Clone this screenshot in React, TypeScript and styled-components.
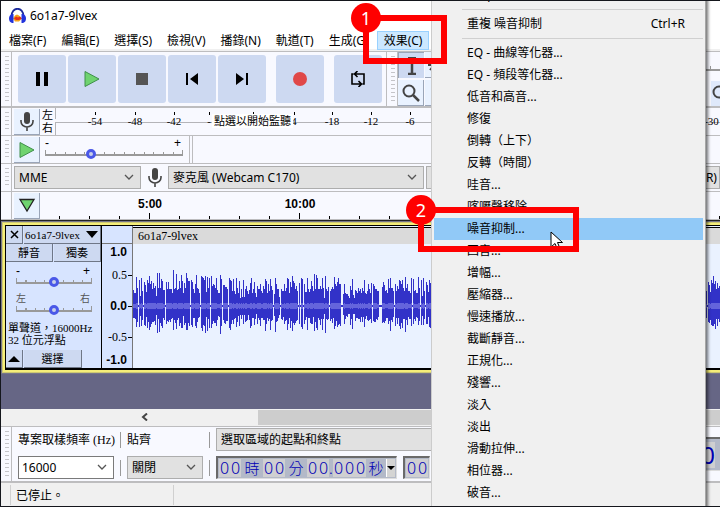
import React from 'react';
import styled, { createGlobalStyle, css } from 'styled-components';

const SANS = '"Noto Sans", "Noto Sans CJK TC", sans-serif';
const SERIF = '"Liberation Serif", "Noto Sans CJK TC", serif';
const ARIAL = '"Liberation Sans", "Noto Sans CJK TC", sans-serif';

const Global = createGlobalStyle`
  * { box-sizing: border-box; }
  html, body { margin: 0; height: 100%; overflow: hidden; }
  body { font: 12px/16px ${SANS}; color: #000; background: #f0f0f0; }
  button, input, select { font: inherit; color: inherit; margin: 0; padding: 0; border: 0; border-radius: 0; outline: 0; }
  svg { display: block; flex: none; }
`;

/* ---------- window ---------- */
const Window = styled.div`
  position: relative;
  display: flex;
  flex-direction: column;
  height: 100vh;
  overflow: hidden;
  border: solid #14161c;
  border-width: 1px 0 1px 1px;
  background: #f0f0f0;
  white-space: nowrap;
`;
const TitleBar = styled.header`
  display: flex;
  align-items: center;
  gap: 4px;
  flex: none;
  height: 30px;
  padding-left: 8px;
  background: #fff;
`;
const MenuBar = styled.nav`
  display: flex;
  gap: 1px;
  flex: none;
  height: 20px;
  padding-left: 1px;
  background: linear-gradient(#fff 18px, #f0f0f0 18px);
`;
const MenuButton = styled.button<{ $open?: boolean }>`
  height: 19px;
  padding: 0 6px;
  line-height: 17px;
  border: 1px solid transparent;
  background: none;
  ${p => p.$open && css`background: #cce8ff; border-color: #99d1ff;`}
`;

/* ---------- toolbars ---------- */
const Toolbar = styled.section<{ $h: number; $thick?: boolean }>`
  display: flex;
  flex: none;
  height: ${p => p.$h}px;
  background: #f8f9ff;
  border-bottom: ${p => (p.$thick ? 2 : 1)}px solid #bdbdbf;
  ${p => p.$thick && 'border-top: 1px solid #bdbdbf;'}
`;
const Grip = styled.div<{ $blank?: boolean }>`
  flex: none;
  width: 11px;
  padding: 4px 2px 4px 4px;
  border-right: 1px solid #bdbdbf;
  &::before {
    content: '';
    display: ${p => (p.$blank ? 'none' : 'block')};
    width: 4px;
    height: 100%;
    background: repeating-linear-gradient(#c4c4c8 0 1px, transparent 1px 4px);
  }
`;
const Transport = styled.div`
  display: flex;
  gap: 2px;
  padding: 3px 4px 3px 6px;
  border-right: 1px solid #bdbdbf;
`;
const TransportButton = styled.button<{ $gap?: boolean }>`
  display: grid;
  place-items: center;
  width: 48px;
  height: 48px;
  margin-left: ${p => (p.$gap ? 8 : 0)}px;
  border-radius: 3px;
  background: #cdd9f1;
`;
const ToolGrid = styled.div`
  display: grid;
  grid-template-columns: 26px 26px;
  grid-template-rows: 26px 26px;
  gap: 2px 1px;
`;
const ToolButton = styled.button<{ $on?: boolean }>`
  display: grid;
  place-items: center;
  width: 26px;
  height: 26px;
  background: ${p => (p.$on ? '#cdd9f1' : '#e9f2ff')};
  border: solid #9aa5b8;
  border-width: ${p => (p.$on ? '1px 0 0 1px' : '0 1px 1px 0')};
`;
const IconCell = styled.div`
  flex: none;
  padding: 1px 1px 0 2px;
`;
const EndTools = styled.div`
  display: grid;
  grid-template-rows: 27px 27px;
  justify-items: end;
  width: 20px;
  margin-left: auto;
  overflow: hidden;
`;
const EndSlider = styled.div`
  width: 20px;
  height: 19px;
  border-bottom: 2px solid #999;
  background: repeating-linear-gradient(to right, #999 0 1px, transparent 1px 10px) 0 100% / 100% 3px no-repeat;
`;
const EndButton = styled.button`
  display: flex;
  width: 9px;
  height: 26px;
  padding-top: 3px;
  margin-top: 2px;
  overflow: hidden;
  background: #dfe9fb;
`;
const Channels = styled.div`
  display: grid;
  grid-template-rows: 13px 13px;
  width: 14px;
  padding-left: 1px;
  font-size: 11px;
  line-height: 13px;
`;
const Meter = styled.div`
  position: relative;
  flex: 1;
  min-width: 0;
  overflow: hidden;
`;
const MeterHint = styled.button`
  position: absolute;
  left: 157px;
  top: 6px;
  height: 14px;
  padding: 0 2px;
  font-size: 11px;
  line-height: 14px;
  background: #fff;
`;

/* ---------- sliders ---------- */
const SliderBox = styled.label<{ $w: number }>`
  display: block;
  width: ${p => p.$w}px;
`;
const SliderEnds = styled.span<{ $muted?: boolean }>`
  display: flex;
  justify-content: space-between;
  height: 12px;
  padding: 0 2px 0 0;
  font: 12px/12px ${ARIAL};
  ${p => p.$muted && 'color: #555; font-size: 10px;'}
`;
const Range = styled.input<{ $n: number }>`
  appearance: none;
  display: block;
  width: 100%;
  height: 10px;
  background:
    linear-gradient(#999, #999) 0 5px / 100% 2px no-repeat,
    linear-gradient(to right, #999 0 1px, transparent 1px calc(100% - 1px), #999 calc(100% - 1px)) 0 1px / 100% 4px no-repeat,
    repeating-linear-gradient(to right, #999 0 1px, transparent 1px calc(100% / ${p => p.$n})) 0 3px / 100% 2px no-repeat;
  &::-webkit-slider-thumb {
    appearance: none;
    width: 10px;
    height: 10px;
    border: 3px solid #4a58e8;
    border-radius: 50%;
    background: #c8d0e8;
  }
`;
const PlaySpeed = styled.div`
  padding: 1px 6px 0 4px;
  border-right: 1px solid #bdbdbf;
`;
const Rule = styled.div`
  width: 3px;
  border-right: 1px solid #bdbdbf;
`;

/* ---------- selects ---------- */
const Picker = styled.label<{ $w?: number }>`
  position: relative;
  display: block;
  flex: ${p => (p.$w ? 'none' : '1 1 0')};
  width: ${p => (p.$w ? p.$w + 'px' : 'auto')};
  min-width: 0;
  height: 23px;
  & > svg { position: absolute; right: 7px; top: 8px; pointer-events: none; }
`;
const Select = styled.select<{ $indent?: number }>`
  appearance: none;
  display: block;
  width: 100%;
  height: 23px;
  padding-left: ${p => p.$indent ?? 4}px;
  line-height: 21px;
  background: #e1e1e1;
  border: 1px solid #adadad;
`;
const TextBox = styled.input`
  display: block;
  width: 100%;
  height: 23px;
  padding-left: 3px;
  background: #fff;
  border: 1px solid #7a7a7a;
`;
const DeviceRow = styled.div`
  display: flex;
  flex: 1;
  min-width: 0;
  padding: 2px 0 0 2px;
  gap: 2px;
`;
const MicCell = styled.div`
  display: grid;
  place-items: center;
  width: 23px;
  height: 23px;
`;

/* ---------- timeline ---------- */
const Timeline = styled.div`
  flex: 1;
  min-width: 0;
  overflow: hidden;
`;

/* ---------- track ---------- */
const TrackFrame = styled.section`
  flex: none;
  height: 154px;
  padding: 1px 0 1px 1px;
  border-top: 1px solid #222;
  background: #77778a;
`;
const TrackGlow = styled.div`
  height: 151px;
  padding: 2px 0 2px 2px;
  background: #f5ee79;
  border: solid #cdc873;
  border-width: 1px 0 1px 1px;
`;
const Track = styled.div`
  display: flex;
  height: 145px;
  border: solid #000;
  border-width: 1px 0 2px 1px;
  background: #d7e4ff;
`;
const Panel = styled.div`
  display: flex;
  flex-direction: column;
  flex: none;
  width: 96px;
  border-right: 1px solid #000;
`;
const PanelRow = styled.div<{ $cols: string }>`
  display: grid;
  grid-template-columns: ${p => p.$cols};
  gap: 1px;
  height: 18px;
  flex: none;
`;
const PanelButton = styled.button`
  display: flex;
  align-items: center;
  justify-content: center;
  height: 18px;
  background: #cdd9f1;
  border: solid #6f7787;
  border-width: 0 1px 1px 0;
  font: 11px/16px ${SERIF};
`;
const NameButton = styled(PanelButton)`
  justify-content: space-between;
  padding: 0 2px 0 1px;
`;
const Gains = styled.div`
  display: flex;
  flex-direction: column;
  gap: 6px;
  padding: 3px 0 0 10px;
  height: 60px;
`;
const Info = styled.p`
  margin: 0;
  padding: 0 2px;
  font: 11px/12px ${SERIF};
`;
const Footer = styled(PanelRow)`
  margin-top: auto;
`;
const Scale = styled.div`
  display: grid;
  grid-template-rows: 18px 16px 30px 32px 30px 16px;
  align-items: center;
  flex: none;
  width: 31px;
  border-right: 1px solid #777;
`;
const ScaleTop = styled.div`
  height: 18px;
  border-bottom: 1px solid #777;
`;
const ScaleMark = styled.div<{ $bold?: boolean; $tick?: boolean }>`
  display: flex;
  align-items: center;
  justify-content: flex-end;
  gap: 1px;
  padding-right: ${p => (p.$tick ? 0 : 5)}px;
  font: ${p => (p.$bold ? 'bold 12px/16px ' + ARIAL : '12px/16px ' + SERIF)};
  &::after {
    content: '';
    display: ${p => (p.$tick ? 'block' : 'none')};
    width: 4px;
    height: 1px;
    background: #000;
  }
`;
const Clip = styled.div`
  flex: 1;
  min-width: 0;
  padding-top: 1px;
  overflow: hidden;
  background: #eaf2ff;
`;
const ClipTitle = styled.div`
  height: 17px;
  padding-left: 5px;
  border-top: 1px solid #000;
  background: #dadada;
  font: 12px/17px ${SERIF};
`;
const Workspace = styled.main`
  flex: 1;
  min-height: 0;
  background: #666685;
`;

/* ---------- bottom ---------- */
const ScrollBar = styled.div`
  display: flex;
  flex: none;
  height: 17px;
  padding-left: 135px;
  border-bottom: 1px solid #f0f0f0;
`;
const ScrollButton = styled.button`
  display: grid;
  place-items: center;
  width: 17px;
  height: 16px;
  background: #f0f0f0;
`;
const ScrollThumb = styled.div`
  flex: 1;
  height: 15px;
  margin: 1px 0 0 105px;
  background: #cdcdcd;
`;
const Selection = styled.div`
  display: grid;
  grid-template-columns: 96px 1px 76px 1px minmax(0, 1fr);
  grid-template-rows: 23px 23px;
  gap: 5px 6px;
  flex: 1;
  min-width: 0;
  padding: 1px 0 0 6px;
  & > * { align-self: center; }
`;
const FieldLabel = styled.label`
  font: 12px/16px ${SERIF};
`;
const Divider = styled.i`
  width: 1px;
  height: 16px;
  background: #999;
`;
const Times = styled.div`
  display: flex;
  gap: 6px;
`;
const TimeBox = styled.div<{ $big?: boolean }>`
  display: flex;
  align-items: center;
  justify-content: ${p => (p.$big ? 'flex-end' : 'flex-start')};
  flex: none;
  height: ${p => (p.$big ? 34 : 23)}px;
  width: ${p => (p.$big ? '112px' : 'auto')};
  margin-top: ${p => (p.$big ? 10 : 0)}px;
  padding: 0 ${p => (p.$big ? 5 : 1)}px 0 1px;
  overflow: hidden;
  border: solid;
  border-width: ${p => (p.$big ? '2px 0 1px 2px' : '2px 1px 1px 2px')};
  border-color: #6a6a6a #ddd #ddd #6a6a6a;
  background: #b3b9c8;
  color: #0000b4;
`;
const Digits = styled.span`
  display: flex;
  background: #cfcfd1;
  font: 16px/18px ${SANS};
  & > b { width: 11px; font-weight: 300; text-align: center; }
`;
const Unit = styled.span<{ $w: number }>`
  width: ${p => p.$w}px;
  text-align: center;
  font: 300 15px/18px "Noto Sans CJK TC", sans-serif;
`;
const TimeArrow = styled.button`
  display: grid;
  place-items: center;
  width: 9px;
  height: 18px;
  background: #d4d4d4;
  border-left: 1px solid #fff;
`;
const BigTime = styled.span`
  font: 24px/26px ${SANS};
  background: #cfcfd1;
`;
const StatusBar = styled.footer`
  display: flex;
  align-items: center;
  flex: none;
  height: 23px;
  padding: 2px 0 1px 9px;
  background: #f0f0f0;
`;
const StatusCell = styled.div<{ $w?: number }>`
  width: ${p => (p.$w ? p.$w + 'px' : 'auto')};
  height: 20px;
  padding: 3px 5px 1px;
  border-left: 1px solid #d0d0d0;
`;

/* ---------- pop-up menu and call-outs ---------- */
const Popup = styled.div`
  position: absolute;
  left: 430px;
  right: 14px;
  top: -17px;
  bottom: -14px;
  padding: 0 2px;
  overflow: hidden;
  background: #f0f0f0;
  border: solid #a6a6a6;
  border-width: 0 1px;
  border-left-color: #ccc;
  box-shadow: 3px 0 3px -1px rgba(0, 0, 0, 0.55);
`;
const PopupItem = styled.button<{ $on?: boolean }>`
  display: flex;
  justify-content: space-between;
  align-items: center;
  width: 100%;
  height: 22px;
  padding: 0 18px 0 33px;
  text-align: left;
  background: ${p => (p.$on ? '#91c9f7' : 'none')};
`;
const PopupLine = styled.hr`
  height: 1px;
  margin: 3px 0 3px 28px;
  border: 0;
  background: #d0d0d0;
`;
const Pointer = styled.div`
  position: absolute;
  left: 549px;
  top: 230px;
`;
const Frame = styled.div<{ $x: number; $y: number; $w: number; $h: number }>`
  position: absolute;
  left: ${p => p.$x}px;
  top: ${p => p.$y}px;
  width: ${p => p.$w}px;
  height: ${p => p.$h}px;
  border: 6px solid #f00;
  pointer-events: none;
`;
const Badge = styled.span`
  position: absolute;
  left: -18px;
  top: -18px;
  width: 30px;
  height: 30px;
  border-radius: 50%;
  background: #f00;
  color: #fff;
  font: 18px/30px ${SANS};
  text-align: center;
`;

/* ---------- icons ---------- */
const Chevron = () => (
  <svg width="10" height="7"><path d="M1 1l4 4 4-4" fill="none" stroke="#555" strokeWidth="1.3" /></svg>
);
const Mic = () => (
  <svg width="16" height="20" viewBox="0 0 16 20">
    <rect x="5" y="0" width="6" height="12" rx="3" fill="#444" />
    <path d="M2 8v1.500a6 5.500 0 0 0 12 0V8M8 15v4" fill="none" stroke="#444" strokeWidth="1.600" />
  </svg>
);
const PlayIcon = () => (
  <svg width="16" height="18"><path d="M1 1.500L15 9 1 16.500z" fill="#6fd36f" stroke="#3f8f4a" /></svg>
);
const Magnifier = () => (
  <svg width="20" height="20">
    <circle cx="8" cy="8" r="5.500" fill="none" stroke="#444" strokeWidth="2" />
    <path d="M12 12l6 6" stroke="#444" strokeWidth="2.500" />
  </svg>
);
const Logo = () => (
  <svg width="17" height="16" viewBox="0 0 17 16">
    <path d="M2.500 9C2-2 15-2 14.500 9" fill="none" stroke="#1c2a9c" strokeWidth="1.800" />
    <path d="M4 10.500l2-3 2-1 2 1 3 3-3 3H6z" fill="#f6a21a" />
    <path d="M5 10.500l2-2 2 1 2-1 2 2-3 1.500H7z" fill="#e8301c" />
    <path d="M4.500 6v9H3Q0 14 0 10.500T3 6zM12.500 6v9H14Q17 14 17 10.500T14 6z" fill="#2233dd" />
  </svg>
);

/* Upward peak of each pixel column, in thirds of a pixel; 0 is silence. */
const PEAKS = [
  48, 40, 39, 87, 53, 0, 78, 30, 83, 45, 0, 72, 63, 43, 78, 70, 90, 67, 75, 52, 70, 55, 60, 30, 98, 55, 98, 55, 82, 75, 48, 48, 0,
  72, 50, 72, 50, 50, 50, 40, 108, 50, 53, 96, 48, 50, 75, 53, 93, 75, 40, 70, 55, 98, 83, 75, 75, 0, 78, 72, 50, 40, 65, 92, 53, 50, 38, 0,
  90, 88, 85, 77, 90, 43, 88, 53, 83, 0, 90, 60, 67, 63, 55, 83, 48, 40, 38, 93, 82, 0, 62, 62, 57, 57, 50, 0, 85, 78, 75, 45, 80, 45,
  35, 85, 55, 40, 75, 25, 50, 28, 78, 28, 50, 60, 45, 35, 48, 70, 83, 40, 50, 72, 38, 28, 60, 52, 52, 65, 45, 40, 60, 52, 82, 75, 40, 65, 45, 80,
  60, 48, 0, 35, 84, 65, 50, 50, 28, 0, 50, 45, 45, 65, 45, 55, 85, 80, 40, 72, 57, 90, 75, 70, 52, 60, 45, 0, 68, 0, 85, 80, 0,
  65, 43, 43, 83, 52, 42, 52, 75, 60, 45, 95, 50, 93, 85, 50, 52, 60, 50, 85, 55, 25, 90, 50, 45, 57, 0, 45, 50, 57, 50, 88, 65, 60, 72, 83, 65, 65,
  0, 0, 35, 65, 40, 37, 35, 30, 25, 60, 48, 80, 32, 25, 48, 45, 40, 55, 45, 50, 40, 55, 45, 78, 40, 35, 45, 65, 50, 40, 68, 0,
  65, 60, 50, 50, 45, 45, 0, 0, 0, 57, 72, 62, 45, 47, 40, 80, 55, 83, 55, 55, 45, 0, 65, 45, 60, 50, 77, 75, 67, 78, 55, 45, 87, 55, 65, 45, 45, 40, 83, 0, 80, 45,
];
const column = (i: number) => PEAKS[i % PEAKS.length];
const wavePath = Array.from({ length: 600 }, (_, i) => {
  const p = column(i);
  const up = p ? Math.round(p / 3) : 1;
  const down = p ? Math.round(p * (0.6 + ((i * 7) % 5) * 0.06) / 3) + 2 : 1;
  return `M${i} ${62 - up}h1v${up + down}h-1z`;
}).join('');
const rmsPath = Array.from({ length: 600 }, (_, i) => {
  const p = column(i);
  const r = p ? 2 + (p > 48 ? 1 : 0) : 0;
  return r ? `M${i} ${62 - r}h1v${r * 2}h-1z` : '';
}).join('');

/* Meter scale: x position and label of each mark; an empty label leaves the bare tick. */
const METER_MARKS: [number, string][] = [
  [41, '-54'], [81, '-48'], [120, '-42'], [155, '-'], [199, ''], [240, '4'], [278, '-18'], [317, '-12'], [356, '-6'],
];
const EFFECTS = [
  'EQ - 曲線等化器...', 'EQ - 頻段等化器...', '低音和高音...', '修復', '倒轉（上下）', '反轉（時間）', '哇音...',
  '喀嚦聲移除...', '噪音抑制...', '回音...', '增幅...', '壓縮器...', '慢速播放...', '截斷靜音...', '正規化...',
  '殘響...', '淡入', '淡出', '滑動拉伸...', '相位器...', '破音...',
];
const MENUS = ['檔案(F)', '編輯(E)', '選擇(S)', '檢視(V)', '播錄(N)', '軌道(T)', '生成(G)', '效果(C)'];

const Zeros = ({ n }: { n: number }) => (
  <Digits>{Array.from({ length: n }, (_, i) => <b key={i}>0</b>)}</Digits>
);

export default function App() {
  return (
    <Window>
      <Global />
      <TitleBar><Logo /><span>6o1a7-9lvex</span></TitleBar>
      <MenuBar>
        {MENUS.map((m, i) => <MenuButton key={m} $open={i === 7}>{m}</MenuButton>)}
      </MenuBar>

      <Toolbar $h={57} $thick>
        <Grip />
        <Transport>
          <TransportButton aria-label="暫停"><svg width="14" height="14"><path d="M1 0h4v14H1zM9 0h4v14H9z" /></svg></TransportButton>
          <TransportButton aria-label="播放"><PlayIcon /></TransportButton>
          <TransportButton aria-label="停止"><svg width="12" height="12"><path d="M0 0h12v12H0z" fill="#555" /></svg></TransportButton>
          <TransportButton aria-label="跳至開頭"><svg width="14" height="14"><path d="M1 1h2v12H1zM13 1v12L5 7z" /></svg></TransportButton>
          <TransportButton aria-label="跳至結尾"><svg width="14" height="14"><path d="M11 1h2v12h-2zM1 1v12l8-6z" /></svg></TransportButton>
          <TransportButton aria-label="錄製" $gap><svg width="14" height="14"><circle cx="7" cy="7" r="7" fill="#e04848" /></svg></TransportButton>
          <TransportButton aria-label="循環" $gap>
            <svg width="16" height="16" viewBox="0 0 16 16">
              <path d="M5 3h9v10h-1.500M3.500 3H2v10h9M7.500 0L4.500 3l3 3M8.500 10l3 3-3 3" fill="none" stroke="#000" strokeWidth="1.600" />
            </svg>
          </TransportButton>
        </Transport>
        <Grip />
        <ToolGrid>
          <ToolButton $on aria-label="選擇工具"><svg width="12" height="18"><path d="M2 1h8M2 17h8M6 1v16" stroke="#444" strokeWidth="2.500" /></svg></ToolButton>
          <ToolButton aria-label="包絡工具"><svg width="20" height="16"><path d="M0 8h8M2 3l4 5-4 5" stroke="#444" strokeWidth="2" fill="none" /></svg></ToolButton>
          <ToolButton aria-label="縮放工具"><Magnifier /></ToolButton>
          <ToolButton aria-label="多功能工具"><svg width="16" height="16"><path d="M1 3l12 10M1 13L13 3" stroke="#888" /></svg></ToolButton>
        </ToolGrid>
        <EndTools><EndSlider /><EndButton aria-label="縮小"><Magnifier /></EndButton></EndTools>
      </Toolbar>

      <Toolbar $h={28}>
        <Grip />
        <IconCell><ToolButton aria-label="錄音電平"><Mic /></ToolButton></IconCell>
        <Channels><span>左</span><span>右</span></Channels>
        <Meter>
          <svg width="1200" height="27">
            <path d="M0.500 0v11M0.500 14v13M0 14.500h1200" stroke="#b4b4b8" fill="none" />
            {METER_MARKS.map(([x, label]) => (
              <g key={x}>
                <path d={`M${x - 0.5} 4v3`} stroke="#000" />
                {label && <text x={x - 1} y="17" textAnchor="middle" fontSize="11" fontFamily='"Liberation Serif", serif'>{label}</text>}
              </g>
            ))}
            <text x="649" y="17" fontSize="11" fontFamily='"Liberation Serif", serif'>-30</text>
          </svg>
          <MeterHint>點選以開始監聽</MeterHint>
        </Meter>
      </Toolbar>

      <Toolbar $h={28}>
        <Grip />
        <IconCell><ToolButton aria-label="以指定速度播放"><PlayIcon /></ToolButton></IconCell>
        <PlaySpeed>
          <SliderBox $w={138}>
            <SliderEnds><span>-</span><span>+</span></SliderEnds>
            <Range type="range" aria-label="播放速度" $n={14} min={0} max={100} defaultValue={32} />
          </SliderBox>
        </PlaySpeed>
        <Rule />
      </Toolbar>

      <Toolbar $h={28}>
        <Grip />
        <DeviceRow>
          <Picker $w={127}><Select aria-label="音訊主機"><option>MME</option></Select><Chevron /></Picker>
          <MicCell><Mic /></MicCell>
          <Picker $w={256}><Select aria-label="錄音裝置"><option>麥克風 (Webcam C170)</option></Select><Chevron /></Picker>
          <Picker><Select aria-label="播放裝置" $indent={203}><option>喇叭 (Realtek(R) Audio)</option></Select></Picker>
        </DeviceRow>
      </Toolbar>

      <Toolbar $h={28}>
        <Grip $blank />
        <IconCell>
          <ToolButton aria-label="釘選播放頭"><svg width="18" height="15"><path d="M2 1.500h14L9 13z" fill="#6fd36f" stroke="#222" strokeWidth="1.300" /></svg></ToolButton>
        </IconCell>
        <Timeline>
          <svg width="1200" height="27">
            {Array.from({ length: 38 }, (_, i) => {
              const x = 19 + i * 30;
              const major = i % 5 === 3;
              return (
                <g key={x}>
                  <path d={`M${x - 0.5} ${major ? 21 : 24}v6`} stroke="#000" />
                  {major && i < 20 && <text x={x} y="16" textAnchor="middle" fontSize="12" fontWeight="bold" fontFamily='"Liberation Sans", sans-serif'>{((i - 3) / 5 + 1) * 5}:00</text>}
                </g>
              );
            })}
          </svg>
        </Timeline>
      </Toolbar>

      <TrackFrame>
        <TrackGlow>
          <Track>
            <Panel>
              <PanelRow $cols="17px 1fr">
                <PanelButton aria-label="關閉"><svg width="9" height="9"><path d="M1 1l7 7M8 1L1 8" stroke="#000" strokeWidth="1.500" /></svg></PanelButton>
                <NameButton>6o1a7-9lvex<svg width="12" height="7"><path d="M0 0h12L6 7z" /></svg></NameButton>
              </PanelRow>
              <PanelRow $cols="1fr 1fr"><PanelButton>靜音</PanelButton><PanelButton>獨奏</PanelButton></PanelRow>
              <Gains>
                <SliderBox $w={76}>
                  <SliderEnds><span>-</span><span>+</span></SliderEnds>
                  <Range type="range" aria-label="增益" $n={8} defaultValue={50} />
                </SliderBox>
                <SliderBox $w={76}>
                  <SliderEnds $muted><span>左</span><span>右</span></SliderEnds>
                  <Range type="range" aria-label="左右平衡" $n={8} defaultValue={50} />
                </SliderBox>
              </Gains>
              <Info>單聲道，16000Hz<br />32 位元浮點</Info>
              <Footer $cols="17px 58px">
                <PanelButton aria-label="摺疊"><svg width="12" height="6"><path d="M0 6h12L6 0z" /></svg></PanelButton>
                <PanelButton>選擇</PanelButton>
              </Footer>
            </Panel>
            <Scale>
              <ScaleTop />
              <ScaleMark $bold>1.0</ScaleMark>
              <ScaleMark $tick>0.5</ScaleMark>
              <ScaleMark $bold $tick>0.0</ScaleMark>
              <ScaleMark $tick>-0.5</ScaleMark>
              <ScaleMark $bold>-1.0</ScaleMark>
            </Scale>
            <Clip>
              <ClipTitle>6o1a7-9lvex</ClipTitle>
              <svg width="600" height="125" shapeRendering="crispEdges">
                <path d={wavePath} fill="#3232c8" />
                <path d={rmsPath} fill="#6464dc" />
              </svg>
            </Clip>
          </Track>
        </TrackGlow>
      </TrackFrame>
      <Workspace />

      <ScrollBar>
        <ScrollButton aria-label="向左捲動"><svg width="7" height="8"><path d="M6 0.500L2 4l4 3.500" fill="none" stroke="#444" strokeWidth="2" /></svg></ScrollButton>
        <ScrollThumb />
      </ScrollBar>

      <Toolbar $h={57} $thick>
        <Grip />
        <Selection>
          <FieldLabel htmlFor="rate">專案取樣頻率 (Hz)</FieldLabel>
          <Divider />
          <FieldLabel htmlFor="snap">貼齊</FieldLabel>
          <Divider />
          <Picker><Select aria-label="選取範圍"><option>選取區域的起點和終點</option></Select></Picker>
          <Picker><TextBox id="rate" defaultValue="16000" /><Chevron /></Picker>
          <Divider />
          <Picker><Select id="snap"><option>關閉</option></Select><Chevron /></Picker>
          <Divider />
          <Times>
            <TimeBox>
              <Zeros n={2} /><Unit $w={22}>時</Unit><Zeros n={2} /><Unit $w={22}>分</Unit><Zeros n={2} />
              <Unit $w={4}>.</Unit><Zeros n={3} /><Unit $w={20}>秒</Unit>
              <TimeArrow aria-label="時間格式"><svg width="8" height="4"><path d="M0 0h8L4 4z" /></svg></TimeArrow>
            </TimeBox>
            <TimeBox><Zeros n={2} /></TimeBox>
          </Times>
        </Selection>
        <TimeBox $big><BigTime>00</BigTime></TimeBox>
      </Toolbar>

      <StatusBar>
        <StatusCell $w={163}>已停止。</StatusCell>
        <StatusCell />
      </StatusBar>

      <Popup role="menu">
        <PopupItem role="menuitem">Graphic EQ</PopupItem>
        <PopupLine />
        <PopupItem role="menuitem"><span>重複 噪音抑制</span><span>Ctrl+R</span></PopupItem>
        <PopupLine />
        {EFFECTS.map(e => <PopupItem key={e} role="menuitem" $on={e === '噪音抑制...'}>{e}</PopupItem>)}
      </Popup>
      <Pointer>
        <svg width="14" height="20"><path d="M1 1v15l4-3.500 2.500 6 2.500-1-2.500-6h5z" fill="#fff" stroke="#000" /></svg>
      </Pointer>
      <Frame $x={362} $y={14} $w={84} $h={49}><Badge>1</Badge></Frame>
      <Frame $x={417} $y={206} $w={161} $h={45}><Badge>2</Badge></Frame>
    </Window>
  );
}
